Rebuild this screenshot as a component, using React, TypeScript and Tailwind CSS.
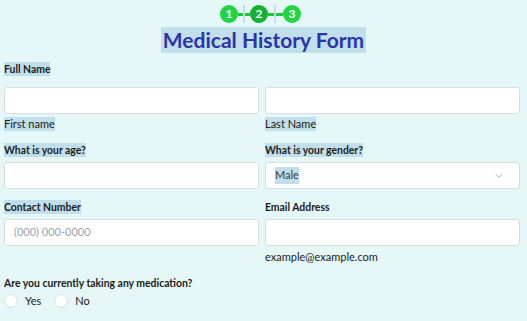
import React from 'react';
import { ChevronDown } from 'lucide-react';

const hl = 'bg-[#c1dfea]';

function Label({ text, bold = true, marked = true }: { text: string; bold?: boolean; marked?: boolean }) {
  return (
    <span className={`inline-block self-start leading-[14px] text-[#1b1b1b] ${bold ? 'font-bold text-[10.4px]' : 'text-[11px]'} ${marked ? hl : ''}`}>
      {text}
    </span>
  );
}

function Field({ placeholder }: { placeholder?: string }) {
  return (
    <div className="h-[27px] rounded-[3px] border border-[#d5dde3] bg-white px-[9px] flex items-center text-[11px] text-[#9aa3ae]">
      {placeholder}
    </div>
  );
}

function Step({ n, dark }: { n: number; dark?: boolean }) {
  return (
    <div className={`w-[18px] h-[18px] rounded-full flex items-center justify-center text-[12px] font-bold text-white ${dark ? 'bg-[#13b134]' : 'bg-[#20d443]'}`}>
      {n}
    </div>
  );
}

function Radio({ label }: { label: string }) {
  return (
    <label className="flex items-center gap-[7px] text-[11px] text-[#1b1b1b]">
      <span className="w-[14px] h-[14px] rounded-full border border-[#d5dde3] bg-white" />
      {label}
    </label>
  );
}

export default function App() {
  return (
    <div className="w-[527px] h-[321px] bg-[#e5f7f6] px-[4px] pt-[5px] overflow-hidden" style={{ fontFamily: 'Lato, sans-serif' }}>
      <div className="flex justify-center items-center pr-[6px]">
        <div className="flex items-center">
          <Step n={1} />
          <div className="w-[5px] h-[3px] bg-[#1bc63c]" />
          <div className="w-[2px] h-[18px] bg-[#c1dfea]" />
          <div className="w-[5px] h-[3px] bg-[#1bc63c]" />
          <Step n={2} dark />
          <div className="w-[6px] h-[3px] bg-[#1bc63c]" />
          <div className="w-[2px] h-[18px] bg-[#c1dfea]" />
          <div className="w-[7px] h-[3px] bg-[#1bc63c]" />
          <Step n={3} />
        </div>
      </div>
      <div className="flex justify-center mt-[4px]">
        <h1 className={`${hl} px-[2px] h-[26px] flex items-center text-[21px] font-bold text-[#2a35a8]`}>
          Medical History Form
        </h1>
      </div>

      <div className="mt-[9px] flex flex-col">
        <Label text="Full Name" />
        <div className="grid grid-cols-2 gap-[6px] mt-[11px] pr-[3px]">
          <div className="flex flex-col gap-[3px]">
            <Field />
            <Label text="First name" bold={false} />
          </div>
          <div className="flex flex-col gap-[3px]">
            <Field />
            <Label text="Last Name" bold={false} />
          </div>
        </div>

        <div className="grid grid-cols-2 gap-[6px] mt-[12px] pr-[3px]">
          <div className="flex flex-col gap-[5px]">
            <Label text="What is your age?" />
            <Field />
          </div>
          <div className="flex flex-col gap-[5px]">
            <Label text="What is your gender?" />
            <div className="h-[27px] rounded-[3px] border border-[#d5dde3] bg-white pl-[9px] pr-[14px] flex items-center justify-between text-[11px] text-[#303a46]">
              <span className={hl}>Male</span>
              <ChevronDown className="w-[12px] h-[12px] text-[#8a96a3]" strokeWidth={1.5} />
            </div>
          </div>
        </div>

        <div className="grid grid-cols-2 gap-[6px] mt-[11px] pr-[3px]">
          <div className="flex flex-col gap-[5px]">
            <Label text="Contact Number" />
            <Field placeholder="(000) 000-0000" />
          </div>
          <div className="flex flex-col gap-[5px]">
            <Label text="Email Address" marked={false} />
            <Field />
            <span className="text-[11px] leading-[14px] text-[#1b1b1b] -mt-[1px]">example@example.com</span>
          </div>
        </div>

        <div className="mt-[12px] flex flex-col gap-[3px]">
          <Label text="Are you currently taking any medication?" marked={false} />
          <div className="flex items-center gap-[13px]">
            <Radio label="Yes" />
            <Radio label="No" />
          </div>
        </div>
      </div>
    </div>
  );
}
